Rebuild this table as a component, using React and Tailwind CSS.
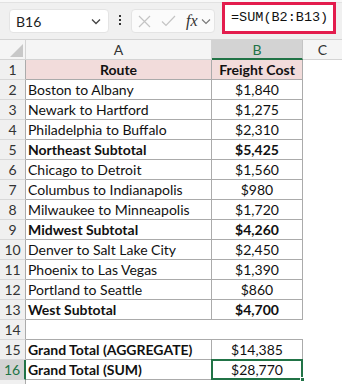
const rows = [
  { n: 1, a: "Route", b: "Freight Cost", head: true },
  { n: 2, a: "Boston to Albany", b: "$1,840" },
  { n: 3, a: "Newark to Hartford", b: "$1,275" },
  { n: 4, a: "Philadelphia to Buffalo", b: "$2,310" },
  { n: 5, a: "Northeast Subtotal", b: "$5,425", bold: true },
  { n: 6, a: "Chicago to Detroit", b: "$1,560" },
  { n: 7, a: "Columbus to Indianapolis", b: "$980" },
  { n: 8, a: "Milwaukee to Minneapolis", b: "$1,720" },
  { n: 9, a: "Midwest Subtotal", b: "$4,260", bold: true },
  { n: 10, a: "Denver to Salt Lake City", b: "$2,450" },
  { n: 11, a: "Phoenix to Las Vegas", b: "$1,390" },
  { n: 12, a: "Portland to Seattle", b: "$860" },
  { n: 13, a: "West Subtotal", b: "$4,700", bold: true },
  { n: 14, empty: true },
  { n: 15, a: "Grand Total (AGGREGATE)", b: "$14,385", boldA: true },
  { n: 16, a: "Grand Total (SUM)", b: "$28,770", boldA: true, selected: true },
  { n: 17, blank: true },
];

function FormulaBar() {
  return (
    <div className="h-[40px] bg-[#f0f0f0] border-b border-[#d4d4d4] flex flex-col">
      <div className="h-[3px] bg-[#f8f8f8] border-b border-[#e2e2e2]" />
      <div className="flex items-start flex-1">
        <div className="ml-[9px] mt-[6px] w-[100px] h-[24px] bg-white rounded-[4px] border border-[#e4e4e4] flex items-center justify-between pl-[6px] pr-[6px]">
          <span className="text-[14px] text-[#222]">B16</span>
          <svg width="12" height="12" viewBox="0 0 12 12" fill="none" stroke="#444" strokeWidth="1.3">
            <path d="M2 4.5 L6 8.5 L10 4.5" />
          </svg>
        </div>
        <div className="w-[22px] mt-[12px] flex flex-col items-center gap-[2px]">
          <span className="w-[2px] h-[2px] bg-[#333]" />
          <span className="w-[2px] h-[2px] bg-[#333]" />
          <span className="w-[2px] h-[2px] bg-[#333]" />
        </div>
        <div className="mt-[6px] w-[84px] h-[24px] bg-[#fbfbfb] rounded-[4px] border border-[#e4e4e4] flex items-center pl-[6px] gap-[10px]">
          <svg width="13" height="13" viewBox="0 0 13 13" stroke="#c4c4c4" strokeWidth="1.2">
            <path d="M1 1 L12 12 M12 1 L1 12" />
          </svg>
          <svg width="15" height="12" viewBox="0 0 15 12" fill="none" stroke="#c4c4c4" strokeWidth="1.2">
            <path d="M1 6.5 L5 10.5 L14 1" />
          </svg>
          <div className="flex items-center gap-[3px]">
            <span className="text-[16px] italic text-[#333] leading-none" style={{ fontFamily: '"Liberation Serif", serif' }}>fx</span>
            <svg width="10" height="10" viewBox="0 0 10 10" fill="none" stroke="#777" strokeWidth="1.1">
              <path d="M1 3.5 L5 7.5 L9 3.5" />
            </svg>
          </div>
        </div>
        <div className="ml-[7px] -mt-[1px] w-[114px] h-[32px] bg-white border-[3px] border-[#e31c4d] flex items-center pl-[6px]">
          <span className="text-[13.5px] text-[#111]" style={{ fontFamily: '"Liberation Mono", monospace' }}>=SUM(B2:B13)</span>
        </div>
      </div>
    </div>
  );
}

function ColumnHeaders() {
  return (
    <div className="flex h-[20px] bg-[#f5f5f5] text-[14px] text-[#333]">
      <div className="w-[26px] border-r border-b border-[#d4d4d4] flex items-end justify-end p-[2px]">
        <svg width="13" height="13" viewBox="0 0 13 13">
          <path d="M13 0 L13 13 L0 13 Z" fill="#c8c8c8" />
        </svg>
      </div>
      <div className="w-[186px] border-r border-b border-[#d4d4d4] flex items-center justify-center">A</div>
      <div className="w-[91px] bg-[#d3d3d3] border-r border-[#c4c4c4] border-b-2 border-b-[#217346] flex items-center justify-center text-[#217346]">B</div>
      <div className="flex-1 border-b border-[#d4d4d4] flex items-center justify-center">C</div>
    </div>
  );
}

function Row({ r }) {
  const bordered = !r.empty && !r.blank;
  return (
    <div className="flex h-[20px] text-[14px] text-[#111]">
      <div
        className={
          r.selected
            ? "w-[26px] bg-[#d3d3d3] text-[#217346] border-b border-[#d4d4d4] border-r-2 border-r-[#217346] flex items-center justify-center"
            : "w-[26px] bg-[#f0f0f0] text-[#333] border-b border-[#d8d8d8] border-r border-r-[#ababab] flex items-center justify-center"
        }
      >
        {r.blank ? "" : r.n}
      </div>
      {bordered ? (
        <>
          <div
            className={
              "w-[186px] border-b border-r border-[#ababab] flex items-center px-[2px] " +
              (r.head ? "bg-[#f2dcdb] justify-center font-bold " : "") +
              (r.bold || r.boldA ? "font-bold" : "")
            }
          >
            {r.a}
          </div>
          <div
            className={
              "relative w-[91px] border-b border-r border-[#ababab] flex items-center justify-center " +
              (r.head ? "bg-[#f2dcdb] font-bold " : "") +
              (r.bold ? "font-bold" : "")
            }
          >
            {r.b}
            {r.selected && (
              <>
                <div className="absolute -left-[1px] -top-[1px] -right-[1px] -bottom-[1px] border-2 border-[#217346]" />
                <div className="absolute -right-[3px] -bottom-[3px] w-[5px] h-[5px] bg-[#217346] border border-white" />
              </>
            )}
          </div>
        </>
      ) : r.empty ? (
        <div className="w-[277px] border-b border-[#ababab]" />
      ) : (
        <div className="w-[277px]" />
      )}
      <div className="flex-1" />
    </div>
  );
}

export default function App() {
  return (
    <div className="w-[342px] h-[384px] overflow-hidden bg-white" style={{ fontFamily: 'Lato, "Liberation Sans", sans-serif' }}>
      <FormulaBar />
      <ColumnHeaders />
      {rows.map((r) => (
        <Row key={r.n} r={r} />
      ))}
    </div>
  );
}
